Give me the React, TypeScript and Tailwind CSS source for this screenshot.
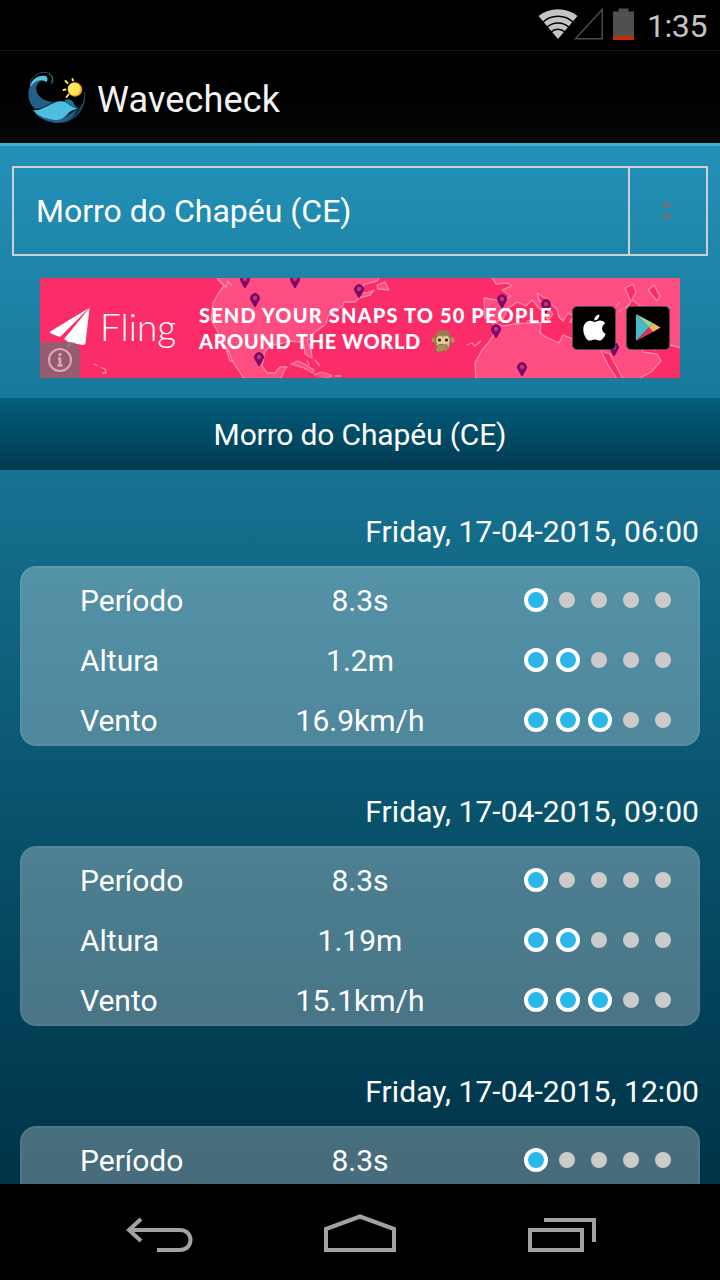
import React from 'react';

interface Measure {
  label: string;
  value: string;
  level: number;
}

interface Forecast {
  date: string;
  measures: Measure[];
}

const SPOT = 'Morro do Chapéu (CE)';

const forecasts: Forecast[] = [
  {
    date: 'Friday, 17-04-2015, 06:00',
    measures: [
      { label: 'Período', value: '8.3s', level: 1 },
      { label: 'Altura', value: '1.2m', level: 2 },
      { label: 'Vento', value: '16.9km/h', level: 3 },
    ],
  },
  {
    date: 'Friday, 17-04-2015, 09:00',
    measures: [
      { label: 'Período', value: '8.3s', level: 1 },
      { label: 'Altura', value: '1.19m', level: 2 },
      { label: 'Vento', value: '15.1km/h', level: 3 },
    ],
  },
  {
    date: 'Friday, 17-04-2015, 12:00',
    measures: [{ label: 'Período', value: '8.3s', level: 1 }],
  },
];

const StatusBar: React.FC = () => (
  <div className="flex h-[50px] shrink-0 items-center justify-end bg-black pr-[13px]">
    <svg width="86" height="50" viewBox="0 0 86 50">
      <path d="M18.500 16 A32 32 0 0 1 57.500 16 L38 39 Z" fill="#c4c4c4" />
      <g fill="none" stroke="#000" strokeWidth="1.500">
        <path d="M22.500 22.500 A22.300 22.300 0 0 1 53.500 22.500" />
        <path d="M27 27.500 A16 16 0 0 1 49 27.500" />
        <path d="M31 32 A10 10 0 0 1 45 32" />
      </g>
      <path d="M55.500 38.800 H82.200 V9.500 Z" fill="none" stroke="#4a4a4a" strokeWidth="1.500" />
    </svg>
    <svg className="ml-[7px]" width="24" height="50" viewBox="0 0 24 50">
      <path d="M0 11.500 H5.500 V8.500 H15.500 V11.500 H21 V36 H0 Z" fill="#505050" />
      <path d="M0 36 H21 V40 H0 Z" fill="#c52c06" />
    </svg>
    <span className="ml-[10px] pt-px text-[32px] leading-[50px] tracking-[-0.400px] text-[#c4c4c4]">1:35</span>
  </div>
);

const Logo: React.FC = () => (
  <svg width="60" height="56" viewBox="0 0 60 56">
    <path d="M57 26 C57 39 46 52 29 51 C19 50 9 44 5 35 C19 48 51 46 57 26Z" fill="#0c2c40" />
    <path d="M56.500 20 C58 33 50 45 37 49.500" fill="none" stroke="#2a6c88" strokeWidth="0.800" />
    <path d="M2 11 C4 4 11 -0.500 18 0.500 C23 1 26 5 24.500 11" fill="none" stroke="#1d5570" strokeWidth="1" />
    <path d="M2 14 C4 7 10 4 18 4 L18.500 10 C14 7.500 10 10 8.500 14 C7 21 12 27 21 29.500 C25 30.500 28 29.500 32 29 L28 36 L7 37 C0 31 -1 21 2 14Z" fill="#235f86" />
    <path d="M2 14 C5 5 12 3 18 4 C20 6 20 8 18.500 10 C14 6 8 8 3 14Z" fill="#58c4e0" />
    <path d="M6 39 C15 50 38 51 49 36 C46 48 34 53 23 50 C15 48 8 44 6 39Z" fill="#235f86" />
    <path d="M5 38 C13 40 22 31 31 29.500 C37 28 42 32 50 36 L46 38 C39 39 39 48 27 48 C18 47 9 44 5 38Z" fill="#4bbfdd" />
    <path d="M6 37 C14 38 20 32 28 29.500" fill="none" stroke="#0a2b3c" strokeWidth="1" />
    <path d="M21 2 C25 4 25 8 23 12" fill="none" stroke="#35a0bd" strokeWidth="0.700" />
    <path d="M36 28 C41 26 45 28 46 32 L49 36 C44 35 40 32 36 28Z" fill="#24789c" stroke="#0a2b3c" strokeWidth="0.600" />
    <circle cx="47" cy="17.500" r="7.200" fill="#f4a31c" />
    <circle cx="46" cy="17" r="6.200" fill="#ffe65a" />
    <g stroke="#ffe04c" strokeWidth="2" strokeLinecap="round">
      <path d="M45 8.500 L44.500 7 M39.500 11 L37.500 9 M37.500 17.500 L35.500 18 M40.500 22.500 L38.500 25" />
    </g>
  </svg>
);

const pins = [
  [205, 10],
  [255, 10],
  [215, 29],
  [319, 20],
  [219, 88],
  [462, 30],
  [506, 35],
  [456, 60],
  [482, 98],
  [574, 78],
];

const WorldMap: React.FC = () => (
  <svg className="absolute inset-0" width="640" height="100" viewBox="0 0 640 100">
    <g fill="#fd4d81" stroke="#fd86aa" strokeWidth="1.300" strokeLinejoin="round">
      <path d="M176 -2 L184 8 L178 16 L173 25 L171 42 L177 52 L180 62 L188 72 L193 84 L197 90 L205 102 H240 L245 91 L247 89 L240 89 L235 95 L227 95 L222 88 L225 73 L232 67 L243 65 L250 63 L260 64 L264 67 L265 76 L272 80 L271 72 L267 63 L275 54 L286 46 L288 38 L294 34 L303 28 L304 24 L315 24 L319 20 L330 17 L334 12 L327 15 L318 14 L325 6 L337 3 L340 -2Z" />
      <path d="M337 7 L345 4 L349 12 L338 11Z" />
      <path d="M251 86 L258 83 L266 87 L274 92 L273 95 L264 90Z" />
      <path d="M274 97 L281 94 L288 96 L292 98 L284 101" />
      <path d="M267 82 L269 87 M275 82 L280 88 M295 98 L301 98" />
      <path d="M178 2 L186 9 L188 3 L192 8" fill="none" />
      <path d="M186 71 L190 83 L194 83" fill="none" />
      <path d="M54 86 L58 88 M60 89 L65 91 L66 95 L62 95" fill="none" />
      <path d="M451 -2 L456 6 L467 5 L472 8 L462 12 L471 18 L462 23 L444 20 L445 40 L451 43 L457 52 L449 64 L442 72 L435 85 L436 102 H642 V-2Z" />
      <path d="M427 67 L432 65 L435 68 L441 63" fill="none" />
    </g>
    <g fill="#fb2d69" stroke="#fd86aa" strokeWidth="1.300" strokeLinejoin="round">
      <path d="M455 45 L464 39 L467 31 L477 24 L486 28 L492 22 L498 29 L504 35 L508 42 L513 36 L499 22 L497 15 L505 20 L517 31 L519 39 L523 43 L528 35 L533 38 L530 44 L539 46 L545 48 L550 60 L541 64 L523 57 L519 65 L506 59 L500 55 L501 45 L488 45 L475 46 L463 48Z" />
      <path d="M585 10 L593 6 L596 14 L592 22 L602 29 L600 36 L586 30 L591 24Z" />
      <path d="M608 12 L614 7 L620 18 L617 23Z" />
      <path d="M561 73 L570 76 L574 84 L583 101 H577 L568 87Z" />
      <path d="M596 62 L605 65 L615 72 L630 67 L642 70 V102 H596 L611 94 L621 83 L617 76 L603 74Z" />
    </g>
    <g stroke="#fd86aa" strokeWidth="1.200">
      <path d="M576 28 L580 24 M579 34 L583 30 M487 43 L493 41" />
    </g>
    {pins.map(([x, y]) => (
      <g key={`${x}-${y}`} transform={`translate(${x} ${y})`}>
        <path d="M0 0 L-3.500 -6 A4.500 4.500 0 1 1 3.500 -6 Z" fill="#790a66" stroke="#790a66" />
        <circle cy="-9" r="2.200" fill="#c9347a" />
      </g>
    ))}
  </svg>
);

const Monkey: React.FC = () => (
  <svg className="ml-[10px]" width="24" height="24" viewBox="0 0 24 24">
    <circle cx="3" cy="11" r="2.500" fill="#b48c5a" />
    <circle cx="21" cy="11" r="2.500" fill="#b48c5a" />
    <path d="M12 1 C18 1 21 6 20.500 13 C20 19 17 22 12 22 C7 22 4 19 3.500 13 C3 6 6 1 12 1Z" fill="#9a7b4b" />
    <path d="M12 8 C17 4 20 10 18 14 L18 18 C15 22 9 22 6 18 L6 14 C4 10 7 4 12 8Z" fill="#e6c797" />
    <circle cx="8.500" cy="11" r="1.600" fill="#2c2118" />
    <circle cx="15.500" cy="11" r="1.600" fill="#2c2118" />
    <path d="M4 22 C5 17 8 14 13 16 C16 15 18 17 17 19 C14 19 13 20 11 23 L6 23Z" fill="#b08c5a" stroke="#715830" strokeWidth="0.700" />
  </svg>
);

const AdBanner: React.FC = () => (
  <div className="relative mx-auto mt-[22px] flex h-[100px] w-[640px] items-center overflow-hidden bg-[#fb2d69]">
    <WorldMap />
    <svg className="absolute top-0 left-0" width="60" height="100" viewBox="0 0 60 100">
      <path d="M49 30 L11 53 Q9 54.500 11 55.500 L20 59 Z M49.500 30 L24 61 L27 63 V72 L32 65 L43 67 Q45 67.500 45.500 65 Z" fill="#fff" />
      <path d="M27 63 L33 65 L27 72Z" fill="#c9b6bd" />
    </svg>
    <span className="relative ml-[60px] w-[98px] pb-[3px] font-[Lato] text-[37px] leading-none font-light text-white">
      Fling
    </span>
    <div className="relative w-[372px] pl-px font-[Lato] text-[20px] leading-[26px] font-black whitespace-nowrap text-white">
      <div className="tracking-[1.150px]">SEND YOUR SNAPS TO 50 PEOPLE</div>
      <div className="flex items-center tracking-[0.600px]">
        AROUND THE WORLD
        <Monkey />
      </div>
    </div>
    <div className="relative ml-[2px] flex gap-[10px]">
      <div className="flex size-[44px] items-center justify-center rounded-[5px] border border-[#5b4b51] bg-black">
        <svg width="25" height="28" viewBox="0 0 26 30">
          <path d="M13 8.500 C15 8.500 16.500 7 19 7 C21.500 7 23.500 8.300 24.500 10 C19.500 13 20.500 19.500 25 21.500 C23.500 25 21 28.500 18.500 28.500 C16.500 28.500 15.500 27.300 13.300 27.300 C11 27.300 10 28.500 8 28.500 C4.500 28.500 1 22 1 16.500 C1 11 4.300 7.200 8 7.200 C10 7.200 11.700 8.500 13 8.500Z" fill="#fff" />
          <path d="M12.800 7 C12.500 3.800 15 1 18.200 0.600 C18.600 4 15.800 7 12.800 7Z" fill="#fff" />
        </svg>
      </div>
      <div className="flex size-[44px] items-center justify-center rounded-[5px] border border-[#5b4b51] bg-black">
        <svg width="26" height="30" viewBox="0 0 26 30">
          <path d="M1 1 V28 L14 14.500Z" fill="#48b9c5" />
          <path d="M1 1 L18 10 L14 14.500Z" fill="#8fd6a3" />
          <path d="M1 28 L18 19 L14 14.500Z" fill="#d8345c" />
          <path d="M18 10 L25.500 14.500 L18 19 L14 14.500Z" fill="#f3b45a" />
        </svg>
      </div>
    </div>
    <div className="absolute bottom-0 left-0 flex h-9 w-10 items-end justify-center rounded-tr-[9px] bg-[#7d6672]/80 pb-[5px]">
      <svg width="26" height="26" viewBox="0 0 26 26" fill="none" stroke="#dba9bc">
        <circle cx="13" cy="13" r="11" strokeWidth="2" />
        <path d="M13 11.500 V18 M11 11.500 H14 M10.500 18.500 H15.500" strokeWidth="2.500" />
        <circle cx="13" cy="7.500" r="1.200" fill="#dba9bc" />
      </svg>
    </div>
  </div>
);

const Rating: React.FC<{ level: number }> = ({ level }) => (
  <div className="flex pl-[60px]">
    {[1, 2, 3, 4, 5].map((n) => (
      <span key={n} className="flex size-8 items-center justify-center">
        {n <= level ? (
          <span className="size-6 rounded-full border-4 border-white bg-[#2bb6ea]" />
        ) : (
          <span className="mr-[2px] size-4 rounded-full bg-[#cbcbcb]" />
        )}
      </span>
    ))}
  </div>
);

const ForecastCard: React.FC<{ forecast: Forecast }> = ({ forecast }) => (
  <section className="px-5">
    <h3 className="mb-[19px] pr-[1px] text-right text-[30px] leading-[30px] tracking-[0.060px]">{forecast.date}</h3>
    <div className="h-[180px] rounded-[16px] border-2 border-white/6 bg-white/28 pt-[2px]">
      {forecast.measures.map((m) => (
        <div key={m.label} className="grid h-[60px] grid-cols-[238px_200px_1fr] items-center text-[30px]">
          <span className="pl-[58px]">{m.label}</span>
          <span className="text-center">{m.value}</span>
          <Rating level={m.level} />
        </div>
      ))}
    </div>
  </section>
);

const NavBar: React.FC = () => (
  <nav className="flex h-24 shrink-0 items-center justify-between bg-black px-[124px]">
    <svg width="72" height="96" viewBox="0 0 72 96" fill="none" stroke="#a2a2a2" strokeWidth="4">
      <path d="M5 46 H56 C70 46 70 66 56 66 H33" />
      <path d="M17 35 L5 46 L17 57" />
    </svg>
    <svg width="76" height="96" viewBox="0 0 76 96" fill="none" stroke="#a2a2a2" strokeWidth="4">
      <path d="M4 66 V45 L38 32.500 L72 45 V66 Z" />
    </svg>
    <svg width="72" height="96" viewBox="0 0 72 96" fill="none" stroke="#a2a2a2" strokeWidth="4">
      <path d="M6 46 H58 V66 H6 Z M20 36 H70 V58" />
    </svg>
  </nav>
);

export default function App() {
  return (
    <div className="flex h-[1280px] w-[720px] flex-col overflow-hidden bg-black font-[Roboto,sans-serif] text-white">
      <StatusBar />
      <header className="flex h-24 shrink-0 items-center border-t border-b-[3px] border-t-[#161616] border-b-[#3eafd8] bg-linear-to-b from-black to-[#050708] pt-[6px] pl-7">
        <Logo />
        <h1 className="ml-[9px] text-[36px] tracking-[0.150px] text-[#f3f3f3]">Wavecheck</h1>
      </header>
      <main className="min-h-0 flex-1 overflow-hidden bg-linear-to-b from-[#2391b7] to-[#003347]">
        <div className="mx-3 mt-5 flex h-[90px] border-2 border-[#cbd0d2] text-[32px]">
          <div className="flex flex-1 items-center pl-[22px]">{SPOT}</div>
          <div className="flex w-[78px] items-center justify-center border-l-2 border-[#cbd0d2] pr-[2px]">
            <svg width="12" height="22" viewBox="0 0 12 22" fill="#69737a">
              <path d="M0.500 7.500 L6 0.500 L11.500 7.500Z M0.500 14.500 L6 21.500 L11.500 14.500Z" />
            </svg>
          </div>
        </div>
        <AdBanner />
        <h2 className="mt-5 flex h-[72px] items-center justify-center bg-linear-to-b from-[#025e7d] to-[#013a50] text-[30px] tracking-[-0.150px]">
          {SPOT}
        </h2>
        <div className="flex flex-col gap-[51px] pt-[47px]">
          {forecasts.map((f) => (
            <ForecastCard key={f.date} forecast={f} />
          ))}
        </div>
      </main>
      <NavBar />
    </div>
  );
}
